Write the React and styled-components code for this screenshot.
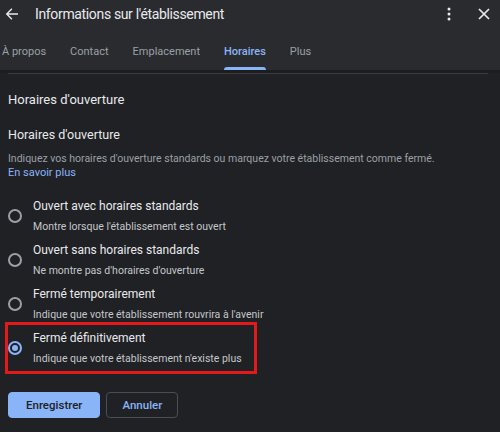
import React from "react";
import styled, { createGlobalStyle } from "styled-components";

const Global = createGlobalStyle`
  html, body { margin: 0; padding: 0; background: #202124; }
  body { font-family: Roboto, "Noto Sans", Arial, sans-serif; width: 500px; height: 432px; overflow: hidden; }
  * { box-sizing: border-box; }
`;

const Page = styled.div`
  width: 500px;
  height: 432px;
  background: #202124;
  color: #e8eaed;
  display: flex;
  flex-direction: column;
`;

const Top = styled.div`
  background: #2a2b2e;
  display: flex;
  flex-direction: column;
`;

const Header = styled.div`
  height: 28px;
  display: flex;
  align-items: center;
  padding: 0 8px 0 4px;
`;

const IconBtn = styled.div`
  width: 16px;
  height: 16px;
  display: flex;
  align-items: center;
  justify-content: center;
  color: #e8eaed;
`;

const Title = styled.div`
  flex: 1;
  margin-left: 15px;
  font-size: 14px;
  letter-spacing: -0.35px;
  color: #e8eaed;
`;

const Actions = styled.div`
  display: flex;
  align-items: center;
  gap: 19px;
`;

const Tabs = styled.div`
  display: flex;
  gap: 24px;
  padding-left: 2px;
  margin-top: 12px;
  height: 30px;
`;

const Tab = styled.div`
  position: relative;
  font-size: 11px;
  font-weight: ${(p) => (p.$active ? 500 : 400)};
  color: ${(p) => (p.$active ? "#8ab4f8" : "#9aa0a6")};
  padding-top: 5px;
  &::after {
    content: "";
    display: ${(p) => (p.$active ? "block" : "none")};
    position: absolute;
    left: 0;
    right: 0;
    bottom: 0;
    height: 3px;
    border-radius: 3px 3px 0 0;
    background: #8ab4f8;
  }
`;

const Band = styled.div`
  height: 3px;
  background: #1c1d20;
`;

const Divider = styled.div`
  height: 1px;
  margin: 0 12px 0 8px;
  background: #3c3d41;
`;

const Content = styled.div`
  padding: 0 8px;
  display: flex;
  flex-direction: column;
`;

const H1 = styled.div`
  font-size: 13px;
  margin-top: 17px;
  line-height: 18px;
`;

const H2 = styled.div`
  font-size: 12.5px;
  margin-top: 17px;
  line-height: 18px;
`;

const Desc = styled.div`
  font-size: 10.5px;
  color: #9aa0a6;
  margin-top: 8px;
  line-height: 14px;
`;

const Link = styled.a`
  font-size: 11px;
  color: #8ab4f8;
  line-height: 14px;
  text-decoration: none;
`;

const Options = styled.div`
  display: flex;
  flex-direction: column;
  gap: 6px;
  margin-top: 17px;
`;

const Option = styled.div`
  display: flex;
  align-items: center;
  height: 38px;
  ${(p) =>
    p.$hl &&
    `
    height: 52px;
    margin: -7px 235px -7px -3px;
    border: 3px solid #e3191c;
  `}
`;

const Radio = styled.div`
  width: 14px;
  height: 14px;
  border-radius: 50%;
  border: 2px solid ${(p) => (p.$on ? "#8ab4f8" : "#9aa0a6")};
  flex-shrink: 0;
  display: flex;
  align-items: center;
  justify-content: center;
  &::after {
    content: "";
    display: ${(p) => (p.$on ? "block" : "none")};
    width: 6px;
    height: 6px;
    border-radius: 50%;
    background: #8ab4f8;
  }
`;

const OptText = styled.div`
  margin-left: 11px;
  display: flex;
  flex-direction: column;
`;

const OptTitle = styled.div`
  font-size: 12px;
  line-height: 16px;
  color: #e8eaed;
`;

const OptSub = styled.div`
  font-size: 10.5px;
  line-height: 14px;
  margin-top: 6px;
  color: #c4c7cb;
`;

const Buttons = styled.div`
  display: flex;
  gap: 6px;
  margin-top: 25px;
`;

const Button = styled.button`
  height: 26px;
  padding: 0 ${(p) => (p.$primary ? "17px" : "15px")};
  border-radius: 4px;
  font-family: inherit;
  font-size: 11.5px;
  font-weight: 500;
  background: ${(p) => (p.$primary ? "#8ab4f8" : "transparent")};
  color: ${(p) => (p.$primary ? "#202124" : "#8ab4f8")};
  border: 1px solid ${(p) => (p.$primary ? "#8ab4f8" : "#4b4d51")};
`;

const options = [
  ["Ouvert avec horaires standards", "Montre lorsque l'établissement est ouvert"],
  ["Ouvert sans horaires standards", "Ne montre pas d'horaires d'ouverture"],
  ["Fermé temporairement", "Indique que votre établissement rouvrira à l'avenir"],
  ["Fermé définitivement", "Indique que votre établissement n'existe plus"],
];

export default function App() {
  return (
    <Page>
      <Global />
      <Top>
        <Header>
          <IconBtn>
            <svg width="14" height="14" viewBox="0 0 24 24" fill="none" stroke="#e8eaed" strokeWidth="2.4" strokeLinecap="square">
              <path d="M21 12H4M11 4l-8 8 8 8" />
            </svg>
          </IconBtn>
          <Title>Informations sur l'établissement</Title>
          <Actions>
            <IconBtn>
              <svg width="4" height="14" viewBox="0 0 4 14" fill="#e8eaed">
                <circle cx="2" cy="2" r="1.5" />
                <circle cx="2" cy="7" r="1.5" />
                <circle cx="2" cy="12" r="1.5" />
              </svg>
            </IconBtn>
            <IconBtn>
              <svg width="12" height="12" viewBox="0 0 12 12" stroke="#e8eaed" strokeWidth="1.7">
                <path d="M1 1l10 10M11 1L1 11" />
              </svg>
            </IconBtn>
          </Actions>
        </Header>
        <Tabs>
          <Tab>À propos</Tab>
          <Tab>Contact</Tab>
          <Tab>Emplacement</Tab>
          <Tab $active>Horaires</Tab>
          <Tab>Plus</Tab>
        </Tabs>
      </Top>
      <Band />
      <Divider />
      <Content>
        <H1>Horaires d'ouverture</H1>
        <H2>Horaires d'ouverture</H2>
        <Desc>Indiquez vos horaires d'ouverture standards ou marquez votre établissement comme fermé.</Desc>
        <Link href="#">En savoir plus</Link>
        <Options>
          {options.map(([t, s], i) => (
            <Option key={i} $hl={i === 3}>
              <Radio $on={i === 3} />
              <OptText>
                <OptTitle>{t}</OptTitle>
                <OptSub>{s}</OptSub>
              </OptText>
            </Option>
          ))}
        </Options>
        <Buttons>
          <Button $primary>Enregistrer</Button>
          <Button>Annuler</Button>
        </Buttons>
      </Content>
    </Page>
  );
}
